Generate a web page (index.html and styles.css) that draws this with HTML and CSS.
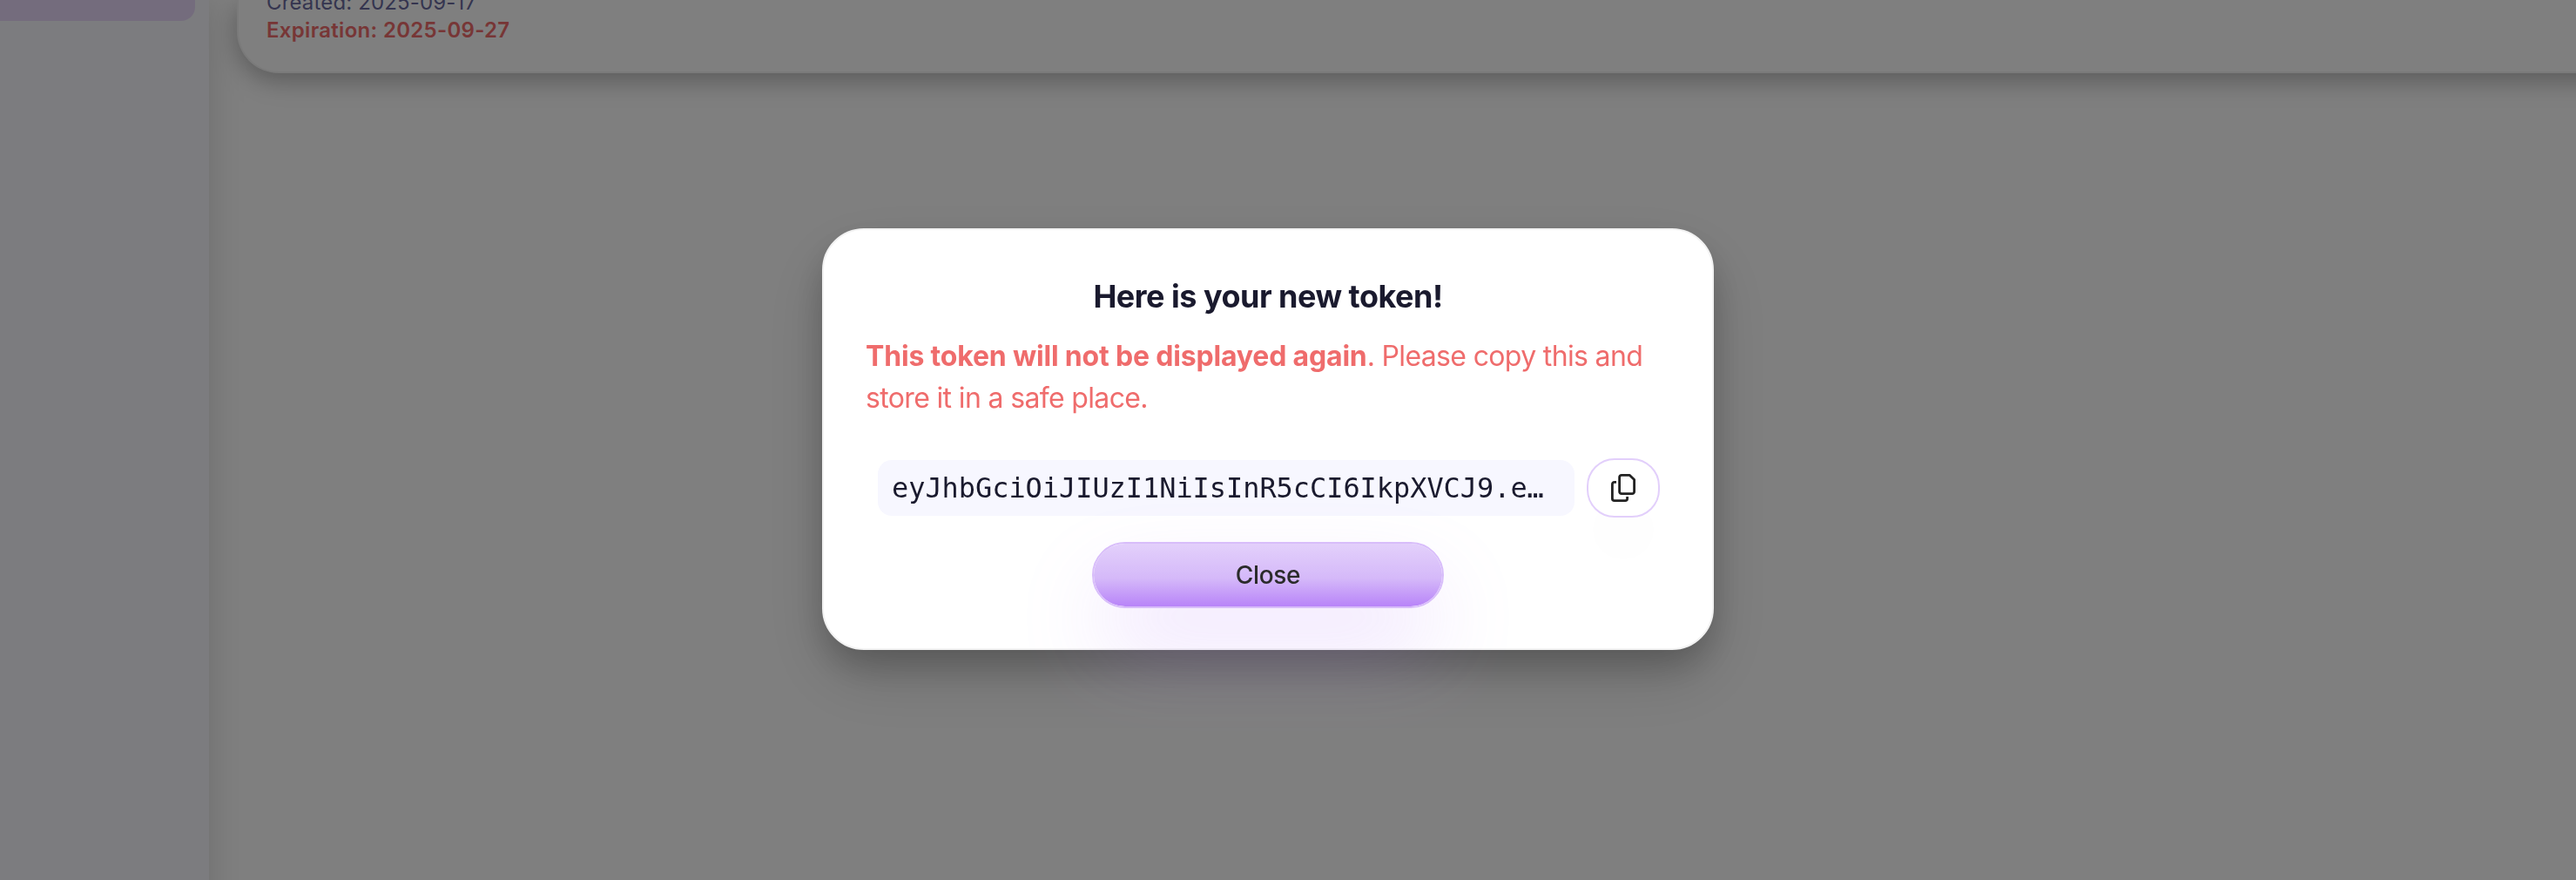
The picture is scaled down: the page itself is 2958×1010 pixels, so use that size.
FILE: index.html
```html
<!DOCTYPE html>
<html lang="en">
<head>
<meta charset="utf-8">
<title>Tokens</title>
<link rel="stylesheet" href="styles.css">
</head>
<body>
<div class="app">
  <nav class="sidebar"><div class="nav-active"></div></nav>
  <main class="content">
    <section class="card">
      <div class="created">Created: 2025-09-17</div>
      <div class="expiration">Expiration: 2025-09-27</div>
    </section>
  </main>
</div>
<div class="overlay">
  <div class="modal" role="dialog">
    <h2 class="title">Here is your new token!</h2>
    <p class="warning"><strong>This token will not be displayed again</strong>. Please copy this and<br>store it in a safe place.</p>
    <div class="token-row">
      <code class="token">eyJhbGciOiJIUzI1NiIsInR5cCI6IkpXVCJ9.e…</code>
      <button class="copy" aria-label="Copy">
        <svg width="28" height="32" viewBox="0 0 28 32" fill="none" stroke="#222" stroke-width="2.8" stroke-linecap="butt" stroke-linejoin="round">
          <path d="M12 1.4h9.400l5.200 5.200v13.600a2.400 2.400 0 0 1-2.400 2.400H12a2.400 2.400 0 0 1-2.400-2.400V3.800a2.400 2.400 0 0 1 2.400-2.400z"/>
          <path d="M6 9.400H3.800A2.400 2.400 0 0 0 1.400 11.800v16.400a2.400 2.400 0 0 0 2.400 2.400h12.400a2.400 2.400 0 0 0 2.400-2.400V26"/>
        </svg>
      </button>
    </div>
    <button class="close">Close</button>
  </div>
</div>
</body>
</html>
```
FILE: styles.css
```css
* { box-sizing: border-box; }
body {
  margin: 0;
  height: 1010px;
  overflow: hidden;
  background: #fff;
  font-family: Inter, "Liberation Sans", sans-serif;
}
.app { display: flex; height: 1010px; overflow: hidden; }
.sidebar {
  width: 240px;
  margin-bottom: -60px;
  padding-right: 16px;
  background: #f8f8fe;
  box-shadow: 0 0 40px rgba(0, 0, 0, .15);
}
.nav-active {
  height: 24px;
  border-radius: 0 0 16px 0;
  background: #e9d9fb;
}
.content { flex: 1; padding-left: 32px; }
.card {
  display: flex;
  flex-direction: column;
  justify-content: flex-end;
  height: 84px;
  margin-right: -100px;
  padding: 0 32px 31px;
  border: 2px solid #f5f5f5;
  border-width: 0 0 2px 2px;
  border-radius: 0 0 0 48px;
  background: #fff;
  box-shadow: 0 8px 24px rgba(0, 0, 0, .2), 0 12px 40px rgba(0, 0, 0, .1);
  font-size: 24px;
  line-height: 32px;
}
.created { color: #6a6a9f; letter-spacing: .15px; }
.expiration { color: #ef6c6c; font-weight: 600; letter-spacing: .3px; }
.overlay {
  position: fixed;
  inset: 0;
  background: rgba(0, 0, 0, .5);
  display: flex;
  justify-content: center;
  align-items: center;
  padding-right: 46px;
}
.modal {
  display: flex;
  flex-direction: column;
  align-items: center;
  width: 1024px;
  height: 484px;
  padding: 52px 49px 46px;
  border: 2px solid #f2f2f2;
  border-radius: 48px;
  margin-bottom: 2px;
  background: #fff;
  box-shadow: 0 20px 40px -4px rgba(0, 0, 0, .22), 0 32px 72px rgba(0, 0, 0, .15);
}
.title {
  margin: 0;
  color: #1a1a2e;
  font-size: 36px;
  font-weight: 700;
  line-height: 48px;
  letter-spacing: -.5px;
}
.warning {
  width: 100%;
  margin: 21px 0 0 -2px;
  color: #ef6c6c;
  font-size: 32px;
  line-height: 48px;
  letter-spacing: -.65px;
  white-space: nowrap;
}
.warning strong { font-weight: 700; letter-spacing: -.18px; }
.token-row {
  display: flex;
  align-items: center;
  gap: 14px;
  width: 100%;
  height: 68px;
  margin-top: 45px;
  padding-left: 13px;
}
.token {
  width: 800px;
  height: 64px;
  padding: 0 16px;
  border-radius: 16px;
  background: #f7f7ff;
  color: #1a1a2e;
  font-family: "DejaVu Sans Mono", monospace;
  font-size: 31.9px;
  line-height: 64px;
  white-space: nowrap;
}
.copy {
  display: flex;
  align-items: center;
  justify-content: center;
  width: 84px;
  height: 68px;
  padding: 0;
  border: 2px solid #e2cffb;
  border-radius: 32px;
  background: #fff;
  box-shadow: 0 48px 80px -8px rgba(0, 0, 0, .02);
}
.close {
  width: 404px;
  height: 76px;
  flex-shrink: 0;
  margin-top: 28px;
  padding: 0;
  border: 2px solid #d8bdfa;
  border-radius: 38px;
  background: linear-gradient(#e3d0fb, #d5b9f9 55%, #b884f8) padding-box;
  box-shadow: 0 48px 100px -12px rgba(184, 132, 248, .32);
  color: #2b2b2b;
  font-family: inherit;
  font-size: 28px;
  font-weight: 500;
  line-height: 72px;
  letter-spacing: -.3px;
}
```
